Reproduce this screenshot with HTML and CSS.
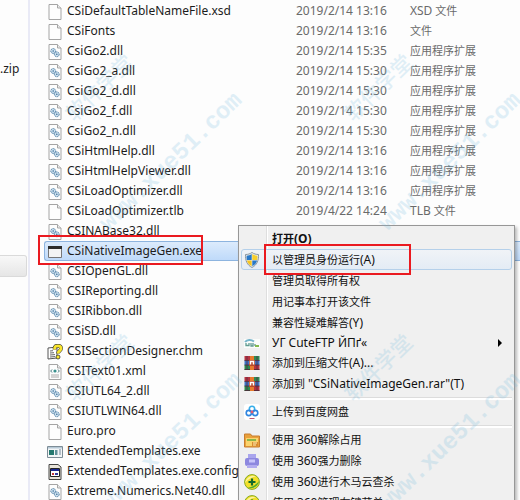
FILE: index.html
```html
<!DOCTYPE html>
<html lang="zh-CN">
<head>
<meta charset="utf-8">
<title>CSiNativeImageGen.exe</title>
<link rel="stylesheet" href="styles.css">
</head>
<body>
<svg class="defs" aria-hidden="true">
  <symbol id="page" viewBox="0 0 16 16">
    <path d="M2 .5h8.5L14 4v11.5H2z" fill="#fdfdfd" stroke="#a5a5a5"/>
    <path d="M10.5.5V4H14" fill="#eee" stroke="#a5a5a5"/>
  </symbol>
  <symbol id="dll" viewBox="0 0 16 16">
    <use href="#page"/>
    <circle cx="6.2" cy="7" r="2.4" fill="#cfe2f0" stroke="#4d7fa5" stroke-dasharray="1.4 .5"/>
    <circle cx="6.2" cy="7" r=".8" fill="#3c6f98"/>
    <circle cx="9.8" cy="10.3" r="2.4" fill="#cfe2f0" stroke="#4d7fa5" stroke-dasharray="1.4 .5"/>
    <circle cx="9.8" cy="10.3" r=".8" fill="#3c6f98"/>
  </symbol>
  <symbol id="exe" viewBox="0 0 16 16">
    <path d="M1.5 2.5h13v11h-13z" fill="#f4f4f4" stroke="#777"/>
    <path d="M1 2h14v3H1z" fill="#2d2d2d"/>
  </symbol>
  <symbol id="chm" viewBox="0 0 16 16">
    <path d="M1 4l9-1v11l-9 1z" fill="#fff" stroke="#555"/>
    <path d="M3 7l3-.3M3 9l4-.3M3 11l5-.4M3 13l5-.4" stroke="#666"/>
    <path d="M7.5 5.500C7.500 2 9 1.800 11 1.800s3 1 3 2.700c0 2.300-3 2.400-3 5" fill="none" stroke="#333" stroke-width="3.800"/>
    <path d="M7.5 5.500C7.500 2 9 1.800 11 1.800s3 1 3 2.700c0 2.300-3 2.400-3 5" fill="none" stroke="#f9e52c" stroke-width="2.800"/>
    <circle cx="11" cy="13" r="2" fill="#f9e52c" stroke="#333" stroke-width=".8"/>
  </symbol>
  <symbol id="xml" viewBox="0 0 16 16">
    <use href="#page"/>
    <path d="M5 5.5L3.7 7 5 8.5M11 5.5L12.300 7 11 8.500" fill="none" stroke="#4a7b80"/>
    <circle cx="8" cy="7" r="1.600" fill="#39918e"/>
    <path d="M4 11h8M4 13h8" stroke="#aaa"/>
  </symbol>
  <symbol id="app" viewBox="0 0 16 16">
    <path d="M.5 2.500h15v11H.5z" fill="#f3f6f7" stroke="#7d8c96"/>
    <path d="M1 3h14v1.500H1z" fill="#b6c9d6"/>
    <path d="M2 6h5v5H2z" fill="#25796f"/>
    <path d="M8 6h2.500v5H8z" fill="#62929a"/>
    <path d="M12 6h2M12 8h2M12 10h2" stroke="#75879a"/>
  </symbol>
  <symbol id="config" viewBox="0 0 16 16">
    <path d="M2 .500h9L14 3v12.500H2z" fill="#e9e5da" stroke="#444"/>
    <path d="M3.500 4.500h9v8h-9z" fill="#fff" stroke="#222"/>
    <path d="M4 5h8v2H4z" fill="#1a2790"/>
    <path d="M5 9h2v2H5z" fill="#c43636"/><path d="M8 9h3v2H8z" fill="#343c9c"/>
  </symbol>
  <symbol id="shield" viewBox="0 0 16 16">
    <path d="M8 .500c2 1.400 4 2 6.500 2 .3 6-1.500 10.500-6.500 13-5-2.500-6.800-7-6.500-13C4 2.500 6 1.900 8 .5z" fill="#e9edf0" stroke="#8b969f"/>
    <path d="M7.700 2v6H2.800C2.500 6.500 2.500 5 2.600 3.700 4.500 3.600 6.200 3 7.700 2z" fill="#2878c7"/>
    <path d="M8.300 2c1.500 1 3.200 1.600 5.100 1.700.1 1.300.1 2.800-.2 4.300H8.300z" fill="#f8cf2c"/>
    <path d="M2.900 8.500h4.800v5.700C5 12.800 3.500 10.900 2.900 8.500z" fill="#f6c51f"/>
    <path d="M8.300 8.500h4.800c-.6 2.400-2.100 4.300-4.800 5.700z" fill="#2878c7"/>
  </symbol>
  <symbol id="ftp" viewBox="0 0 16 16">
    <path d="M0 4h16v9H0z" fill="#fbfdfb"/>
    <path d="M1 7c2-2.500 6-2.800 9-.5" fill="none" stroke="#77b5cb" stroke-width="2"/>
    <path d="M2 8v2.500h3V8m2 0v3h2V8m2 1v2m1 0h3" fill="none" stroke="#619b91" stroke-width="1.300"/>
    <path d="M11 11h4" stroke="#83bb4e" stroke-width="2"/>
  </symbol>
  <symbol id="rar" viewBox="0 0 16 16">
    <path d="M.5 1h7v4.500h-7z" fill="#b5323f"/>
    <path d="M8 1h7.500v4.500H8z" fill="#2f8a52"/>
    <path d="M.5 5.500h15V10H.5z" fill="#3e74c4"/>
    <path d="M.5 10h7v5h-7z" fill="#2b8a4c"/>
    <path d="M8 10h7.500v5H8z" fill="#b5323f"/>
    <path d="M.5 5.500h15M.5 10h15M.5 14.500h15" stroke="#4a2732" stroke-width=".8"/>
    <path d="M3 1v14M13 1v14" stroke="#542c47" stroke-width=".8"/>
    <path d="M6 1h4v14H6z" fill="#e87a2c"/>
    <path d="M5 5h6v6H5z" fill="#b8472a"/>
    <path d="M6.500 9.500v-3h3v3" fill="none" stroke="#fff" stroke-width="1.500"/>
  </symbol>
  <symbol id="baidu" viewBox="0 0 16 16">
    <rect width="16" height="16" rx="3" fill="#fff"/>
    <circle cx="8" cy="5" r="2.700" fill="none" stroke="#38afea" stroke-width="1.600"/>
    <circle cx="4.800" cy="9" r="2.600" fill="none" stroke="#3186e0" stroke-width="1.600"/>
    <circle cx="11.200" cy="9" r="2.600" fill="none" stroke="#3186e0" stroke-width="1.600"/>
    <circle cx="8" cy="8" r="1.400" fill="#e45b73"/>
    <path d="M5.500 14.500h5" stroke="#c2556f"/>
  </symbol>
  <symbol id="folder" viewBox="0 0 16 16">
    <path d="M.5 2h6l1.500 2h7.500v11H.5z" fill="#e9a13b" stroke="#c87c2e"/>
    <path d="M2 6h12v8H2z" fill="#fbd36d"/>
    <path d="M3 7h9v2H3z" fill="#8bb548"/>
    <path d="M8 10h6v4H8z" fill="#d98b31"/><path d="M9 11h4M9 13h3" stroke="#fff1b8"/>
  </symbol>
  <symbol id="shred" viewBox="0 0 16 16">
    <path d="M4 1h8v6H4z" fill="#a9a5ed"/>
    <rect x="1" y="5" width="14" height="8" rx="2" fill="#8d88df"/>
    <path d="M5 6.500h6v3H5z" fill="#c9c6fa"/>
    <path d="M3 12h10v3H3z" fill="#b2acef"/>
  </symbol>
  <symbol id="plus" viewBox="0 0 16 16">
    <circle cx="8" cy="8" r="7.400" fill="#f3e02a" stroke="#86a921"/>
    <path d="M1 9C2 3 8 .500 12 2.200 7.500 3 3.500 5.500 1 9z" fill="#f9f3a0"/>
    <path d="M15 7c-1 6-7 8.500-11 6.800C8.500 13 12.500 10.500 15 7z" fill="#4caa34"/>
    <path d="M8 4.500v7M4.500 8h7" stroke="#15692b" stroke-width="2.200"/>
  </symbol>
</svg>

<div class="explorer">
  <aside class="sidebar">
    <span class="tree-item">.zip</span>
    <span class="tree-item active"></span>
  </aside>
  <main class="files">
    <table>
      <colgroup><col class="col-name"><col class="col-date"><col></colgroup>
      <tbody>
        <tr><td><svg class="icon"><use href="#page"/></svg>CSiDefaultTableNameFile.xsd</td><td>2019/2/14 13:16</td><td><span class="latin">XSD</span> 文件</td></tr>
        <tr><td><svg class="icon"><use href="#page"/></svg>CSiFonts</td><td>2019/2/14 13:16</td><td>文件</td></tr>
        <tr><td><svg class="icon"><use href="#dll"/></svg>CsiGo2.dll</td><td>2019/2/14 15:35</td><td>应用程序扩展</td></tr>
        <tr><td><svg class="icon"><use href="#dll"/></svg>CsiGo2_a.dll</td><td>2019/2/14 15:30</td><td>应用程序扩展</td></tr>
        <tr><td><svg class="icon"><use href="#dll"/></svg>CsiGo2_d.dll</td><td>2019/2/14 15:30</td><td>应用程序扩展</td></tr>
        <tr><td><svg class="icon"><use href="#dll"/></svg>CsiGo2_f.dll</td><td>2019/2/14 15:30</td><td>应用程序扩展</td></tr>
        <tr><td><svg class="icon"><use href="#dll"/></svg>CsiGo2_n.dll</td><td>2019/2/14 15:30</td><td>应用程序扩展</td></tr>
        <tr><td><svg class="icon"><use href="#dll"/></svg>CSiHtmlHelp.dll</td><td>2019/2/14 13:16</td><td>应用程序扩展</td></tr>
        <tr><td><svg class="icon"><use href="#dll"/></svg>CSiHtmlHelpViewer.dll</td><td>2019/2/14 13:16</td><td>应用程序扩展</td></tr>
        <tr><td><svg class="icon"><use href="#dll"/></svg>CSiLoadOptimizer.dll</td><td>2019/2/14 13:16</td><td>应用程序扩展</td></tr>
        <tr><td><svg class="icon"><use href="#page"/></svg>CSiLoadOptimizer.tlb</td><td>2019/4/22 14:24</td><td><span class="latin">TLB</span> 文件</td></tr>
        <tr><td><svg class="icon"><use href="#dll"/></svg>CSINABase32.dll</td><td></td><td></td></tr>
        <tr class="selected"><td><svg class="icon"><use href="#exe"/></svg>CSiNativeImageGen.exe</td><td></td><td></td></tr>
        <tr><td><svg class="icon"><use href="#dll"/></svg>CSIOpenGL.dll</td><td></td><td></td></tr>
        <tr><td><svg class="icon"><use href="#dll"/></svg>CSIReporting.dll</td><td></td><td></td></tr>
        <tr><td><svg class="icon"><use href="#dll"/></svg>CSIRibbon.dll</td><td></td><td></td></tr>
        <tr><td><svg class="icon"><use href="#dll"/></svg>CSiSD.dll</td><td></td><td></td></tr>
        <tr><td><svg class="icon"><use href="#chm"/></svg>CSISectionDesigner.chm</td><td></td><td></td></tr>
        <tr><td><svg class="icon"><use href="#xml"/></svg>CSIText01.xml</td><td></td><td></td></tr>
        <tr><td><svg class="icon"><use href="#dll"/></svg>CSIUTL64_2.dll</td><td></td><td></td></tr>
        <tr><td><svg class="icon"><use href="#dll"/></svg>CSIUTLWIN64.dll</td><td></td><td></td></tr>
        <tr><td><svg class="icon"><use href="#page"/></svg>Euro.pro</td><td></td><td></td></tr>
        <tr><td><svg class="icon"><use href="#app"/></svg>ExtendedTemplates.exe</td><td></td><td></td></tr>
        <tr><td><svg class="icon"><use href="#config"/></svg>ExtendedTemplates.exe.config</td><td></td><td></td></tr>
        <tr><td><svg class="icon"><use href="#dll"/></svg>Extreme.Numerics.Net40.dll</td><td></td><td></td></tr>
      </tbody>
    </table>
  </main>
</div>

<div class="menu" role="menu">
  <button class="item default" role="menuitem"><span class="slot"></span><span>打开<span class="latin">(O)</span></span></button>
  <button class="item hover" role="menuitem"><span class="slot"><svg class="icon"><use href="#shield"/></svg></span><span>以管理员身份运行<span class="latin">(A)</span></span></button>
  <button class="item" role="menuitem"><span class="slot"></span><span>管理员取得所有权</span></button>
  <button class="item" role="menuitem"><span class="slot"></span><span>用记事本打开该文件</span></button>
  <button class="item" role="menuitem"><span class="slot"></span><span>兼容性疑难解答<span class="latin">(Y)</span></span></button>
  <button class="item compact" role="menuitem"><span class="slot"><svg class="icon"><use href="#ftp"/></svg></span><span class="latin">УГ CuteFTP ЙПґ«</span><svg class="arrow" viewBox="0 0 4 8"><path d="M0 0l4 4-4 4z"/></svg></button>
  <button class="item compact" role="menuitem"><span class="slot"><svg class="icon"><use href="#rar"/></svg></span><span>添加到压缩文件<span class="latin">(A)...</span></span></button>
  <button class="item" role="menuitem"><span class="slot"><svg class="icon"><use href="#rar"/></svg></span><span>添加到 <span class="latin">"CSiNativeImageGen.rar"(T)</span></span></button>
  <div class="separator" role="separator"></div>
  <button class="item" role="menuitem"><span class="slot"><svg class="icon"><use href="#baidu"/></svg></span><span>上传到百度网盘</span></button>
  <div class="separator" role="separator"></div>
  <button class="item" role="menuitem"><span class="slot"><svg class="icon"><use href="#folder"/></svg></span><span>使用 <span class="latin">360</span>解除占用</span></button>
  <button class="item" role="menuitem"><span class="slot"><svg class="icon"><use href="#shred"/></svg></span><span>使用 <span class="latin">360</span>强力删除</span></button>
  <button class="item" role="menuitem"><span class="slot"><svg class="icon"><use href="#plus"/></svg></span><span>使用 <span class="latin">360</span>进行木马云查杀</span></button>
  <button class="item" role="menuitem"><span class="slot"><svg class="icon"><use href="#plus"/></svg></span><span>使用 <span class="latin">360</span>管理右键菜单</span></button>
</div>

<div class="mark mark-file"></div>
<div class="mark mark-action"></div>

<div class="stamp stamp-a"><span class="brand">软件学堂</span><span class="site">www.xue51.com</span></div>
<div class="stamp stamp-b"><span class="brand">软件学堂</span><span class="site">www.xue51.com</span></div>
<div class="stamp stamp-c"><span class="brand">软件学堂</span><span class="site">www.xue51.com</span></div>
<div class="stamp stamp-d"><span class="brand">软件学堂</span><span class="site">www.xue51.com</span></div>
</body>
</html>
```
FILE: styles.css
```css
* {
  box-sizing: border-box;
}

body {
  position: relative;
  height: 100vh;
  margin: 0;
  overflow: hidden;
  background: #fdfdfd;
  color: #1c1c1c;
  font: 12px/20px "Noto Sans", "Noto Sans CJK SC", sans-serif;
}

.defs {
  position: absolute;
  width: 0;
  height: 0;
}

.icon {
  flex: none;
  width: 16px;
  height: 16px;
}

.latin {
  font-size: 12px;
}

.explorer {
  display: flex;
  min-height: 100%;
}

.sidebar {
  flex: none;
  display: flex;
  flex-direction: column;
  gap: 174px;
  width: 30px;
  padding-top: 59px;
  border-right: 2px solid #e9eaf6;
}

.tree-item {
  height: 22px;
}

.tree-item.active {
  width: 27px;
  border: 1px solid #dadada;
  border-left: 0;
  border-radius: 0 3px 3px 0;
  background: linear-gradient(#f8f8f8, #e6e6e6);
}

.files {
  flex: 1;
  padding: 1px 0 0 14px;
}

table {
  width: 100%;
  border-spacing: 0;
  table-layout: fixed;
}

.col-name {
  width: 252px;
}

.col-date {
  width: 114px;
}

td {
  height: 20px;
  padding: 0;
  color: #6a6a6a;
  line-height: 18px;
  white-space: nowrap;
}

td:first-child {
  padding-left: 3px;
  color: #1c1c1c;
}

td:last-child {
  font-size: 11px;
}

td .icon {
  margin-right: 4px;
  vertical-align: middle;
}

.selected td {
  border: 1px solid #8db4df;
  border-width: 1px 0;
  background: linear-gradient(#dcebfc, #bfdafa);
}

.selected td:first-child {
  padding-left: 2px;
  border-left-width: 1px;
  border-radius: 3px 0 0 3px;
}

.menu {
  position: absolute;
  top: 225px;
  left: 238px;
  right: 5px;
  padding: 2px;
  border: 1px solid #979797;
  background: linear-gradient(90deg, #f0f0f0 27px, #dedede 27px, #dedede 28px, #fff 28px, #fff 29px, #f0f0f0 29px);
  box-shadow: 2px 2px 3px #0004;
}

.item {
  display: flex;
  align-items: center;
  width: 100%;
  height: 21px;
  padding: 0 9px 0 0;
  border: 1px solid transparent;
  border-radius: 3px;
  background: none;
  color: #111;
  font: 11px/18px "Noto Sans", "Noto Sans CJK SC", sans-serif;
  text-align: left;
  white-space: nowrap;
}

.item.compact {
  height: 20px;
}

.item.default {
  font-weight: bold;
}

.item.hover {
  border-color: #b5d0ea;
  background: linear-gradient(#f0f3f7, #e4ecf5);
}

.slot {
  flex: none;
  display: flex;
  width: 30px;
  padding-left: 2px;
}

.arrow {
  width: 4px;
  height: 8px;
  margin-left: auto;
}

.separator {
  height: 7px;
  margin-left: 27px;
  padding-top: 3px;
}

.separator::before {
  content: "";
  display: block;
  height: 2px;
  border-top: 1px solid #dcdcdc;
  background: #fff;
}

.mark {
  position: absolute;
  border: 2px solid #ea1a20;
}

.mark-file {
  top: 235px;
  left: 38px;
  width: 165px;
  height: 30px;
}

.mark-action {
  top: 244px;
  left: 264px;
  width: 147px;
  height: 31px;
}

.stamp {
  position: absolute;
  display: flex;
  flex-direction: column;
  align-items: center;
  width: 200px;
  color: #6bb5dc;
  opacity: 0.2;
  pointer-events: none;
  transform: rotate(-44deg);
}

.brand {
  font: 500 21px/28px "Noto Sans CJK SC", sans-serif;
}

.site {
  margin-top: 77px;
  font: bold 24px/28px "Liberation Mono", monospace;
}

.stamp-a {
  top: 58px;
  left: 35px;
}

.stamp-b {
  top: 58px;
  left: 314px;
}

.stamp-c {
  top: 338px;
  left: 35px;
}

.stamp-d {
  top: 338px;
  left: 314px;
}
```
